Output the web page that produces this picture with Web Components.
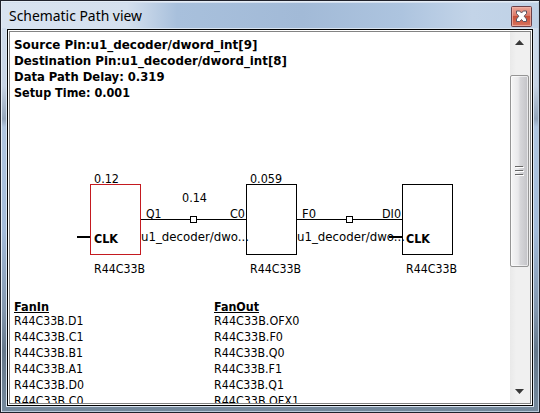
<!DOCTYPE html>
<html lang="en"><head><meta charset="utf-8"><title>Schematic Path view</title>
<style>html,body{margin:0;width:540px;height:413px;overflow:hidden;background:#20222c}</style></head>
<body>
<path-window>
<fit-text slot="title" w="133" size="15" h="20" base="15" face="Noto Sans">Schematic Path view</fit-text>
<path-summary></path-summary>
<path-diagram></path-diagram>
<fan-lists></fan-lists>
</path-window>
<script>
// One line of text set to a given advance width.
class FitText extends HTMLElement{
 connectedCallback(){
  if(this.shadowRoot)return;
  const a=(n,d)=>this.getAttribute(n)||d,h=a('h','16'),w=a('w','70');
  const r=this.attachShadow({mode:'open'});
  r.innerHTML=`<style>:host{display:block;height:${h}px;color:#000}svg{display:block;overflow:visible}text{fill:currentColor;white-space:pre}</style>
  <svg width="${w}" height="${h}"><text x="0" y="${a('base','12')}" textLength="${w}" lengthAdjust="spacingAndGlyphs" font-family="'${a('face','DejaVu Sans Condensed')}','DejaVu Sans',sans-serif" font-size="${a('size','12.7')}" font-weight="${a('weight','400')}"></text></svg>`;
  r.querySelector('text').textContent=this.getAttribute('text')||this.textContent.trim();
 }
}
customElements.define('fit-text',FitText);

class CloseButton extends HTMLElement{
 constructor(){super();this.attachShadow({mode:'open'}).innerHTML=`<style>:host{display:block;width:21px;height:21px}svg{display:block}</style>
 <svg width="21" height="21" viewBox="0 0 21 21"><defs><linearGradient id="g" x2="0" y2="1"><stop offset="0" stop-color="#eba99c"/><stop offset=".46" stop-color="#dc7867"/><stop offset=".5" stop-color="#c94f39"/><stop offset="1" stop-color="#d8745f"/></linearGradient></defs>
 <rect x=".5" y=".5" width="20" height="20" rx="1" fill="url(#g)" stroke="#6b4049"/><rect x="1.5" y="1.5" width="18" height="18" fill="none" stroke="#f1b6a9" stroke-opacity=".75"/>
 <path d="M5.5 5H8.7L10.5 7L12.3 5H15.5V7.5L13.2 10.2L15.5 13V15.5H12.3L10.5 13.5L8.7 15.5H5.5V13L7.8 10.2L5.5 7.5Z" fill="#fff" stroke="#5d5561" stroke-width="1"/></svg>`}
}
customElements.define('close-button',CloseButton);

class ScrollBar extends HTMLElement{
 constructor(){super();this.attachShadow({mode:'open'}).innerHTML=`<style>
 :host{display:flex;flex-direction:column;flex:none;width:20px;background:linear-gradient(90deg,#e9e9e9,#f0f0f0 30%,#f0f0f0)}
 svg{display:block;flex:none}.up{height:43px}.thumb{height:190px;width:17px;border:1px solid #959595;border-radius:2px;background:linear-gradient(90deg,#f6f6f6,#e9e9eb 42%,#d6d6d9 55%,#c3c3c7);box-shadow:inset 0 0 0 1px #fff9;display:flex;align-items:center;justify-content:center}
 .down{margin-top:auto;height:21px}</style>
 <svg class="up" width="20" height="43"><path d="M5 13L9.5 8L14 13Z" fill="#383838"/></svg>
 <div class="thumb"><svg width="9" height="12"><path d="M0 1.5H8M0 5.5H8M0 9.5H8" stroke="#666"/><path d="M1 2.5H9M1 6.5H9M1 10.5H9" stroke="#fff"/></svg></div>
 <svg class="down" width="20" height="21"><path d="M5 7L14 7L9.5 12Z" fill="#383838"/></svg>`}
}
customElements.define('scroll-bar',ScrollBar);

class PathWindow extends HTMLElement{
 constructor(){super();this.attachShadow({mode:'open'}).innerHTML=`<style>
 :host{display:grid;grid-template-rows:25px 1fr;box-sizing:border-box;width:540px;height:413px;padding:2px 5px 5px 5px;border:1px solid #20222c;
 background:linear-gradient(180deg,#d3dfee 0,#c6d3e4 85px,#94a5ba 118px,#b0c6e0 126px,#a3bbd9 230px,#8296ad 310px,#64778a 350px,#75899c 100%);box-shadow:inset 1px 1px #e4ecf5,inset -1px -1px #b9c9da}
 header{display:flex;justify-content:space-between;align-items:flex-start;margin:0 -4px;padding:3px 5px 0 7px;background:linear-gradient(90deg,#d9e3f0 0,#d5e0ee 125px,#a8c0dc 175px,#a2bad7 300px,#adc4df 400px,#c3d4e8 470px,#bfd1e6)}
 close-button{margin:0 1px 0 0}
 .well{border:1px solid #d9e4f0;min-height:0}
 .black{height:100%;box-sizing:border-box;border:1px solid #000;padding:1px;background:#fff}
 .gray{height:100%;box-sizing:border-box;border:1px solid #848484;display:flex;background:#fff;overflow:hidden}
 main{flex:1;min-width:0;overflow:hidden;display:flex;flex-direction:column;padding:5px 0 0 4px}
 ::slotted(*){flex:none}
 </style><header><slot name="title"></slot><close-button></close-button></header>
 <div class="well"><div class="black"><div class="gray"><main><slot></slot></main><scroll-bar></scroll-bar></div></div></div>`}
}
customElements.define('path-window',PathWindow);

class PathSummary extends HTMLElement{
 constructor(){super();const rows=[['Source Pin:u1_decoder/dword_int[9]',243.5],['Destination Pin:u1_decoder/dword_int[8]',273],['Data Path Delay: 0.319',150.5],['Setup Time: 0.001',116]];
 this.attachShadow({mode:'open'}).innerHTML=`<style>:host{display:block;height:64px}</style>`+rows.map(r=>`<fit-text weight="700" w="${r[1]}" text="${r[0]}"></fit-text>`).join('')}
}
customElements.define('path-summary',PathSummary);

// Cells, nets and pins placed on the schematic canvas.
class PathDiagram extends HTMLElement{
 constructor(){super();
 const t=(x,y,w,s,b)=>`<text x="${x}" y="${y}" textLength="${w}" lengthAdjust="spacingAndGlyphs"${b?' font-weight="700"':''}>${s}</text>`;
 this.attachShadow({mode:'open'}).innerHTML=`<style>:host{display:block;height:198px}svg{display:block;font:12.7px 'DejaVu Sans Condensed','DejaVu Sans',sans-serif}</style>
 <svg width="496" height="198" viewBox="14 101 496 198">
 <g fill="none" stroke="#000" shape-rendering="crispEdges"><path d="M141 219.5H246M297 219.5H402"/><path stroke-width="2" d="M77 237H90M389 237H402"/>
 <rect x="90.5" y="184.5" width="50" height="70" stroke="#c41a20"/><rect x="246.5" y="184.5" width="50" height="70"/><rect x="402.5" y="184.5" width="50" height="70"/>
 <g fill="#fff"><rect x="190.5" y="216.5" width="6" height="6"/><rect x="346.5" y="216.5" width="6" height="6"/></g></g>
 ${t(94,183,25,'0.12')+t(250,183,32,'0.059')+t(182,202,25,'0.14')+t(146,218,15.5,'Q1')+t(230,218,15,'C0')+t(302,218,14,'F0')+t(382,218,19,'DI0')+t(141,241,108,'u1_decoder/dwo...')+t(297,241,108,'u1_decoder/dwo...')+t(94,243,24,'CLK',1)+t(406,243,24,'CLK',1)+t(94,273,51,'R44C33B')+t(250,273,51,'R44C33B')+t(406,273,51,'R44C33B')}
 </svg>`}
}
customElements.define('path-diagram',PathDiagram);

class FanLists extends HTMLElement{
 constructor(){super();
 const col=(h,w,rows)=>`<section><fit-text class="h" h="14" base="12" weight="700" w="${w}" text="${h}"></fit-text>${rows.map(r=>`<fit-text base="12" w="${r[1]}" text="R44C33B.${r[0]}"></fit-text>`).join('')}</section>`;
 this.attachShadow({mode:'open'}).innerHTML=`<style>:host{display:grid;grid-template-columns:200px 200px}section{display:flex;flex-direction:column;align-items:flex-start}.h{background:linear-gradient(#000,#000) 0 13px/100% 1px no-repeat}</style>`
 +col('FanIn',35,[['D1',69.5],['C1',69.5],['B1',69],['A1',69],['D0',70],['C0',69.5]])+col('FanOut',45,[['OFX0',85.5],['F0',69],['Q0',70.5],['F1',68],['Q1',70],['OFX1',85]])}
}
customElements.define('fan-lists',FanLists);
</script></body></html>
